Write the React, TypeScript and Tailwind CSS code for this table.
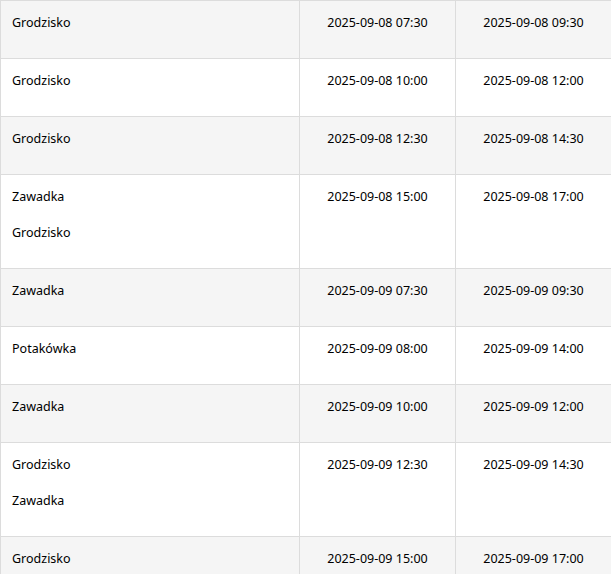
import React from "react";

type Row = { places: string[]; start: string; end: string };

const rows: Row[] = [
  { places: ["Grodzisko"], start: "2025-09-08 07:30", end: "2025-09-08 09:30" },
  { places: ["Grodzisko"], start: "2025-09-08 10:00", end: "2025-09-08 12:00" },
  { places: ["Grodzisko"], start: "2025-09-08 12:30", end: "2025-09-08 14:30" },
  { places: ["Zawadka", "Grodzisko"], start: "2025-09-08 15:00", end: "2025-09-08 17:00" },
  { places: ["Zawadka"], start: "2025-09-09 07:30", end: "2025-09-09 09:30" },
  { places: ["Potakówka"], start: "2025-09-09 08:00", end: "2025-09-09 14:00" },
  { places: ["Zawadka"], start: "2025-09-09 10:00", end: "2025-09-09 12:00" },
  { places: ["Grodzisko", "Zawadka"], start: "2025-09-09 12:30", end: "2025-09-09 14:30" },
  { places: ["Grodzisko"], start: "2025-09-09 15:00", end: "2025-09-09 17:00" },
];

export default function App() {
  return (
    <div
      className="w-[612px] bg-white text-[12.5px] text-black"
      style={{ fontFamily: '"Noto Sans", "Open Sans", sans-serif' }}
    >
      <div className="flex flex-col border-t border-l border-[#dcdcdc]">
        {rows.map((r, i) => (
          <div
            key={i}
            className={`flex border-b border-[#dcdcdc] ${i % 2 === 0 ? "bg-[#f5f5f5]" : "bg-white"}`}
          >
            <div className="w-[299px] shrink-0 border-r border-[#dcdcdc] pl-[11px] pt-[12px] pb-[9px]">
              {r.places.map((p, j) => (
                <div key={j} className="h-[20px] leading-[20px] mb-[16px]">
                  {p}
                </div>
              ))}
            </div>
            <div className="w-[156px] shrink-0 border-r border-[#dcdcdc] pt-[12px] text-center">
              <div className="h-[20px] leading-[20px]">{r.start}</div>
            </div>
            <div className="w-[156px] shrink-0 border-r border-[#dcdcdc] pt-[12px] text-center">
              <div className="h-[20px] leading-[20px]">{r.end}</div>
            </div>
          </div>
        ))}
      </div>
    </div>
  );
}
